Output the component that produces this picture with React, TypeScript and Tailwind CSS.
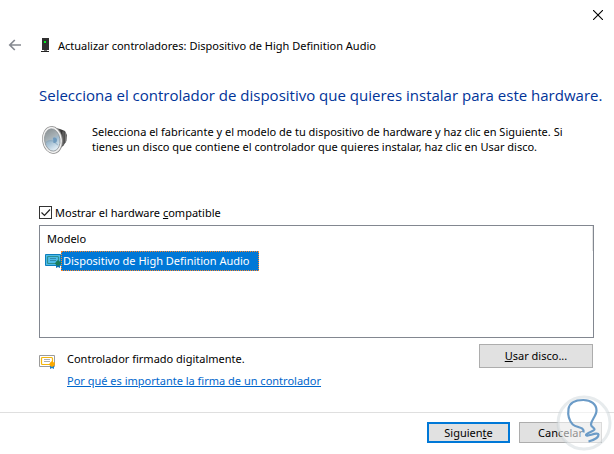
import React from 'react'

function BackIcon() {
  return (
    <svg width="14" height="12" viewBox="0 0 14 12" fill="none" stroke="#858990" strokeWidth="1.700">
      <path d="M6.800 1 1.800 6l5 5M2 6H13" />
    </svg>
  )
}

function DeviceIcon() {
  return (
    <svg width="8" height="16" viewBox="0 0 8 16">
      <path d="M1 1h7v12H1z" fill="#303030" />
      <path d="M3 13h3v1H3z" fill="#777" />
      <path d="M0 14h8v1H0z" fill="#222" />
      <path d="M3 4h2v2H3z" fill="#00f020" />
    </svg>
  )
}

function SpeakerIcon() {
  return (
    <svg width="28" height="32" viewBox="0 0 28 32">
      <defs>
        <linearGradient id="cone" x1="0" y1="0" x2="0.3" y2="1">
          <stop offset="0" stopColor="#858c8e" />
          <stop offset="0.5" stopColor="#a9b3b8" />
          <stop offset="0.62" stopColor="#9fbbcf" />
          <stop offset="1" stopColor="#dce9f2" />
        </linearGradient>
        <linearGradient id="magnet" x1="0" y1="0" x2="1" y2="0">
          <stop offset="0" stopColor="#8a8a8a" />
          <stop offset="0.6" stopColor="#333" />
          <stop offset="1" stopColor="#6a6a6a" />
        </linearGradient>
      </defs>
      <path d="M12 3.500 18 5l5 2 2 4-.5 6-3 4.500L15 27z" fill="url(#magnet)" />
      <path d="M21 7.500v14M23.500 9v10" stroke="#858585" strokeWidth=".7" />
      <ellipse cx="10.500" cy="16" rx="10.300" ry="14" fill="#8f8f8f" transform="rotate(-8 10.500 16)" />
      <ellipse cx="10.300" cy="16" rx="9.500" ry="13.200" fill="#f0f0f0" transform="rotate(-8 10.300 16)" />
      <ellipse cx="10.300" cy="16" rx="7.700" ry="11.200" fill="url(#cone)" stroke="#8c9296" strokeWidth=".8" transform="rotate(-8 10.300 16)" />
      <path d="M4 18.500c2-2 4-2.500 7-1.500l5 4" stroke="#7d9fb9" strokeWidth="1.200" fill="none" opacity=".5" />
      <path d="M11 14c2-1 4 0 4 2s-1.500 3.500-3.500 3z" fill="#6f9abd" />
    </svg>
  )
}

type CertColors = { frame: string; paper: string; border: string; line: string; seal: string; ribbon: string }

function CertificateIcon({ frame, paper, border, line, seal, ribbon }: CertColors) {
  return (
    <svg className="block shrink-0" width="16" height="14" viewBox="0 0 16 14">
      <path d="M.5.5h15v11H.5z" fill={paper} stroke={frame} />
      <rect x="2.500" y="2.500" width="11" height="7" rx="1" fill="none" stroke={border} strokeWidth="1.200" />
      <path d="M5 4.500h6M5 6.500h6" stroke={line} strokeWidth=".8" />
      <path d="M11 10h4v4l-2-1-2 1z" fill={ribbon} />
      <path d="m13 6 1 1.200h1.800V9l.2.500-1.200 1.500L13 12l-1.800-1L10 9.500l1.200-2z" fill={seal} />
    </svg>
  )
}

function Watermark() {
  return (
    <svg className="pointer-events-none absolute right-[2px] bottom-[3px]" width="56" height="56" viewBox="0 0 56 56" fill="none">
      <circle cx="28" cy="28" r="26" fill="#fff" fillOpacity=".55" stroke="#c9d2d8" strokeOpacity=".45" strokeWidth="3" />
      <path
        d="M27.500 37.500C28.500 31.500 21 33 16.800 29.500 13.500 26 11.500 21 12.500 14 13.500 8 19 5 27.300 5 35 5 40.500 9 40.500 15.500c0 5.500-5.500 9.500-5.500 14 0 2.500 3.500 3 3.500 4.800 0 2.200-8 3.200-8.500 5.700-.3 2.500 12-3.500 12.500-.5.300 3-4.500 5.500-10 7"
        stroke="#6b9bc7"
        strokeWidth="2.200"
      />
    </svg>
  )
}

export default function App() {
  return (
    <div className="relative min-h-screen flex flex-col bg-white text-black font-['Noto_Sans','Open_Sans',sans-serif] text-[11px] leading-[15px]">
      <div className="flex justify-end pt-[10px] pr-[11px]">
        <button aria-label="Cerrar">
          <svg className="block" width="10" height="10" viewBox="0 0 10 10" stroke="#000" strokeWidth="1.100">
            <path d="M0 0l10 10M10 0 0 10" />
          </svg>
        </button>
      </div>

      <header className="flex items-center h-4 mt-[17px] pl-2">
        <button aria-label="Atrás">
          <BackIcon />
        </button>
        <div className="flex items-center gap-[9px] pl-[19px]">
          <DeviceIcon />
          <span>Actualizar controladores: Dispositivo de High Definition Audio</span>
        </div>
      </header>

      <main className="flex-1 pl-[39px] pr-5">
        <h1 className="mt-[30px] text-[15px] leading-6 text-[#003399] whitespace-nowrap font-['Open_Sans',sans-serif]">
          Selecciona el controlador de dispositivo que quieres instalar para este hardware.
        </h1>

        <div className="flex gap-[22px] pl-[3px] mt-[17px]">
          <div className="shrink-0 w-7">
            <SpeakerIcon />
          </div>
          <p className="whitespace-nowrap">
            Selecciona el fabricante y el modelo de tu dispositivo de hardware y haz clic en Siguiente. Si
            <br />
            tienes un disco que contiene el controlador que quieres instalar, haz clic en Usar disco.
          </p>
        </div>

        <label className="flex items-center gap-[3px] mt-12 h-4">
          <span className="relative flex">
            <input
              type="checkbox"
              defaultChecked
              className="peer appearance-none w-[13px] h-[13px] border border-[#333] bg-white"
            />
            <svg
              className="pointer-events-none absolute inset-0 hidden peer-checked:block"
              width="13"
              height="13"
              viewBox="0 0 13 13"
              fill="none"
              stroke="#222"
              strokeWidth="1.200"
            >
              <path d="m2.500 6.500 3 3 5.500-6" />
            </svg>
          </span>
          <span>
            Mostrar el hardware <u>c</u>ompatible
          </span>
        </label>

        <div className="h-[113px] mt-[5px] border border-[#828790]">
          <table className="w-full border-collapse">
            <thead>
              <tr>
                <th className="h-[25px] pl-[7px] text-left font-normal border-r border-[#e5e5e5]">Modelo</th>
              </tr>
            </thead>
            <tbody>
              <tr>
                <td className="pl-[5px]">
                  <div className="flex items-center">
                    <CertificateIcon frame="#0c7fbd" paper="#4dbbe8" border="#2d8f8f" line="#2a7f9e" seal="#1b7d5c" ribbon="#0a70b8" />
                    <span className="h-5 pl-px pr-2 leading-[18px] whitespace-nowrap bg-[#0078d7] text-white border border-dotted border-[#ff8728]">
                      Dispositivo de High Definition Audio
                    </span>
                  </div>
                </td>
              </tr>
            </tbody>
          </table>
        </div>

        <div className="flex justify-between items-start mt-[6px]">
          <div className="flex gap-3 pt-[7px]">
            <div className="pt-1">
              <CertificateIcon frame="#9b9b9b" paper="#fff" border="#f5b60a" line="#999" seal="#fba900" ribbon="#1a7fcc" />
            </div>
            <div>
              <p>Controlador firmado digitalmente.</p>
              <a href="#firma" className="block mt-[7px] text-[#0066cc] underline">
                Por qué es importante la firma de un controlador
              </a>
            </div>
          </div>
          <button className="w-[114px] h-6 mr-px leading-[22px] border border-[#adadad] bg-[#e1e1e1]">
            <u>U</u>sar disco...
          </button>
        </div>
      </main>

      <footer className="flex justify-end gap-[9px] h-[42px] pt-[9px] pr-3 border-t border-[#dfdfdf]">
        <button className="w-[83px] h-[21px] leading-[17px] border-2 border-[#0078d7] bg-[#e1e1e1]">
          Siguien<u>t</u>e
        </button>
        <button className="w-[83px] h-[21px] leading-[19px] border border-[#adadad] bg-[#e1e1e1]">Cancelar</button>
      </footer>
      <Watermark />
    </div>
  )
}
